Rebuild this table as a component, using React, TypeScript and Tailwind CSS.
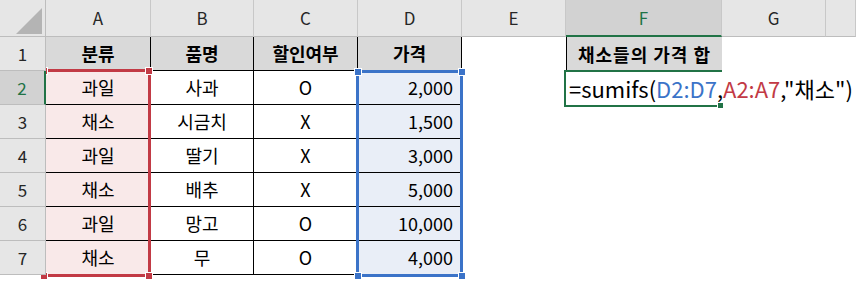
import React from "react";

const rows = [
  ["과일", "사과", "O", "2,000"],
  ["채소", "시금치", "X", "1,500"],
  ["과일", "딸기", "X", "3,000"],
  ["채소", "배추", "X", "5,000"],
  ["과일", "망고", "O", "10,000"],
  ["채소", "무", "O", "4,000"],
];

const cols = ["A", "B", "C", "D", "E", "F", "G", ""];

const Handle = ({ className }: { className: string }) => (
  <div className={`absolute h-[8px] w-[8px] border border-white ${className}`} />
);

const App = () => {
  return (
    <div className="relative h-[285px] w-[856px] overflow-hidden bg-white font-['Noto_Sans_CJK_KR',sans-serif] text-black">
      <div className="grid grid-cols-[46px_105px_103px_104px_104px_104px_156px_104px_1fr] grid-rows-[37px_repeat(7,34px)_1fr]">
        {/* CORNER */}
        <div className="relative z-10 border-r border-b border-[#bdbdbd] bg-[#e6e6e6]">
          <svg className="absolute inset-0" width="46" height="37">
            <polygon points="16,34 42,34 42,8" fill="#b4b4b4" />
          </svg>
        </div>
        {/* COLUMN HEADERS */}
        {cols.map((c) => (
          <div
            key={c || "H"}
            className={
              c === "F"
                ? "flex items-center justify-center border-r border-[#c8c8c8] border-b-2 border-b-[#217346] bg-[#d2d2d2] text-[17px] text-[#217346]"
                : "flex items-center justify-center border-r border-b border-[#c8c8c8] border-b-[#bdbdbd] bg-[#e6e6e6] text-[17px] text-[#262626]"
            }
          >
            {c}
          </div>
        ))}

        {/* ROW 1 */}
        <div className="relative z-10 flex items-center justify-center border-r border-b border-[#bdbdbd] bg-[#e6e6e6] text-[17px] text-[#262626]">
          1
        </div>
        {["분류", "품명", "할인여부", "가격"].map((h) => (
          <div
            key={h}
            className="flex items-center justify-center border-r border-b border-black bg-[#d9d9d9] text-[18px] font-bold"
          >
            {h}
          </div>
        ))}
        <div />
        <div className="flex items-center justify-center border-l border-black bg-[#d9d9d9] text-[18px] font-bold tracking-[1px]">
          채소들의 가격 합
        </div>
        <div />
        <div />

        {/* DATA ROWS */}
        {rows.map((r, i) => (
          <React.Fragment key={i}>
            <div
              className={
                i === 0
                  ? "relative z-10 flex items-center justify-center border-b border-[#bdbdbd] border-r-2 border-r-[#217346] bg-[#d2d2d2] text-[17px] text-[#217346]"
                  : "relative z-10 flex items-center justify-center border-r border-b border-[#bdbdbd] bg-[#e6e6e6] text-[17px] text-[#262626]"
              }
            >
              {i + 2}
            </div>
            <div className="flex items-center justify-center border-r border-b border-black bg-[#f9e9e9] text-[18px]">
              {r[0]}
            </div>
            <div className="flex items-center justify-center border-r border-b border-black text-[18px]">
              {r[1]}
            </div>
            <div className="flex items-center justify-center border-r border-b border-black text-[18px]">
              {r[2]}
            </div>
            <div className="flex items-center justify-end border-r border-b border-black bg-[#e9eef7] pr-[8px] text-[18px]">
              {r[3]}
            </div>
            <div />
            {i === 0 ? (
              <div className="relative z-20 flex items-center overflow-visible whitespace-nowrap pl-[3px] text-[22px]">
                <span>=sumifs(</span>
                <span className="text-[#3b73c8]">D2:D7</span>
                <span>,</span>
                <span className="text-[#c23a45]">A2:A7</span>
                <span>,"채소")</span>
              </div>
            ) : (
              <div />
            )}
            <div />
            <div />
          </React.Fragment>
        ))}

        {/* ROW 8 (CUT OFF) */}
        <div className="relative z-10 border-r border-[#bdbdbd] bg-[#e6e6e6]" />
      </div>

      {/* RANGE A2:A7 */}
      <div className="absolute left-[41px] top-[69px] h-[208px] w-[110px] border-[3px] border-[#c23a45]" />
      <Handle className="left-[40px] top-[67px] bg-[#c23a45]" />
      <Handle className="left-[145px] top-[67px] bg-[#c23a45]" />
      <Handle className="left-[40px] top-[272px] bg-[#c23a45]" />
      <Handle className="left-[145px] top-[272px] bg-[#c23a45]" />

      {/* RANGE D2:D7 */}
      <div className="absolute left-[356px] top-[70px] h-[207px] w-[107px] border-[3px] border-[#3b73c8]" />
      <Handle className="left-[354px] top-[68px] bg-[#3b73c8]" />
      <Handle className="left-[458px] top-[68px] bg-[#3b73c8]" />
      <Handle className="left-[354px] top-[272px] bg-[#3b73c8]" />
      <Handle className="left-[458px] top-[272px] bg-[#3b73c8]" />

      {/* ACTIVE CELL F2 */}
      <div className="absolute left-[564px] top-[70px] h-[37px] w-[158px] border-y-2 border-l-2 border-[#217346]" />
      <div className="absolute left-[717px] top-[102px] h-[7px] w-[7px] border border-white bg-[#217346]" />
    </div>
  );
};

export default App;
